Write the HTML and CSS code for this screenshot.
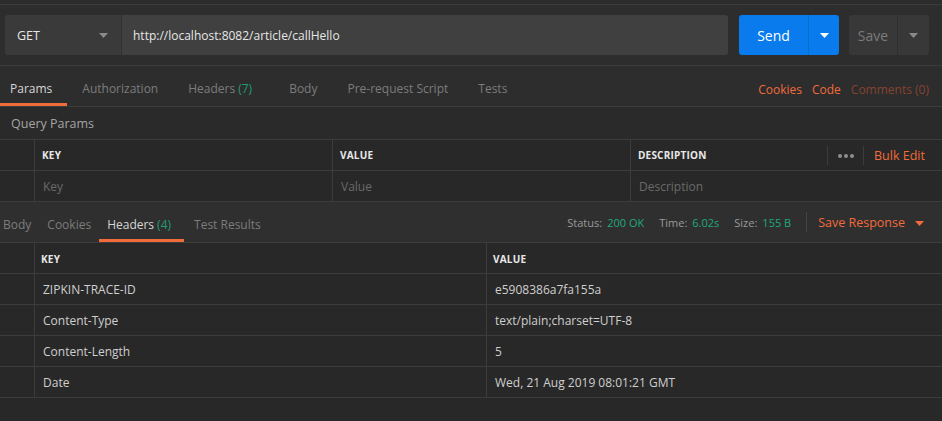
FILE: index.html
```html
<!DOCTYPE html>
<html>
<head>
<meta charset="utf-8">
<link rel="stylesheet" href="styles.css">
</head>
<body>
<div class="topstrip"></div>
<div class="requestbar">
  <div class="urlgroup">
    <div class="method"><span>GET</span><svg class="caret" width="9" height="5" viewBox="0 0 9 5"><path d="M0 0h9L4.5 5z" fill="#8a8a8a"/></svg></div>
    <div class="url">http://localhost:8082/article/callHello</div>
  </div>
  <div class="btn send"><span class="main">Send</span><span class="drop"><svg width="9" height="5" viewBox="0 0 9 5"><path d="M0 0h9L4.5 5z" fill="#fff"/></svg></span></div>
  <div class="btn save"><span class="main">Save</span><span class="drop"><svg width="9" height="5" viewBox="0 0 9 5"><path d="M0 0h9L4.5 5z" fill="#8a8a8a"/></svg></span></div>
</div>
<div class="reqtabs">
  <div class="tabs">
    <div class="tab active first">Params</div>
    <div class="tab">Authorization</div>
    <div class="tab wide">Headers <span class="count">(7)</span></div>
    <div class="tab">Body</div>
    <div class="tab">Pre-request Script</div>
    <div class="tab">Tests</div>
  </div>
  <div class="links">
    <span class="link">Cookies</span>
    <span class="link">Code</span>
    <span class="link dim">Comments (0)</span>
  </div>
</div>
<div class="qp">Query Params</div>
<div class="ptable">
  <div class="prow head">
    <div class="c"></div>
    <div class="c">KEY</div>
    <div class="c">VALUE</div>
    <div class="c desc">DESCRIPTION</div>
    <div class="c dots"><span></span><span></span><span></span></div>
    <div class="c bulk">Bulk Edit</div>
  </div>
  <div class="prow">
    <div class="c"></div>
    <div class="c ph">Key</div>
    <div class="c ph">Value</div>
    <div class="c ph nb">Description</div>
    <div class="c nb"></div>
    <div class="c nb"></div>
  </div>
</div>
<div class="restabs">
  <div class="tabs small">
    <div class="tab rfirst">Body</div>
    <div class="tab">Cookies</div>
    <div class="tab active">Headers <span class="count">(4)</span></div>
    <div class="tab rlast">Test Results</div>
  </div>
  <div class="status">
    <span class="lbl">Status:</span><span class="val">200 OK</span>
    <span class="lbl">Time:</span><span class="val">6.02s</span>
    <span class="lbl">Size:</span><span class="val">155 B</span>
    <span class="saveresp">Save Response <svg width="9" height="5" viewBox="0 0 9 5"><path d="M0 0h9L4.5 5z" fill="#f26b3a"/></svg></span>
  </div>
</div>
<div class="rtable">
  <div class="rrow head"><div class="c"></div><div class="c">KEY</div><div class="c">VALUE</div></div>
  <div class="rrow"><div class="c"></div><div class="c">ZIPKIN-TRACE-ID</div><div class="c">e5908386a7fa155a</div></div>
  <div class="rrow"><div class="c"></div><div class="c">Content-Type</div><div class="c">text/plain;charset=UTF-8</div></div>
  <div class="rrow"><div class="c"></div><div class="c">Content-Length</div><div class="c">5</div></div>
  <div class="rrow"><div class="c"></div><div class="c">Date</div><div class="c">Wed, 21 Aug 2019 08:01:21 GMT</div></div>
</div>
</body>
</html>
```
FILE: styles.css
```css
* { box-sizing: border-box; }
html, body { margin: 0; padding: 0; }
body {
  background: #282828;
  font-family: "Open Sans", "Noto Sans", sans-serif;
  font-size: 12px;
  color: #cfcfcf;
  width: 942px;
  height: 421px;
  overflow: hidden;
}
.topstrip {
  height: 5px;
  background: #2c2c2c;
  border-bottom: 1px solid #3c3c3c;
}
.requestbar {
  display: flex;
  align-items: center;
  height: 61px;
  padding: 10px 13px 10px 5px;
  background: #2d2d2d;
  border-bottom: 1px solid #3c3c3c;
}
.urlgroup {
  display: flex;
  flex: 0 0 723px;
  height: 40px;
  border-radius: 3px;
  overflow: hidden;
}
.method {
  width: 117px;
  background: #3a3a3a;
  border-right: 1px solid #323232;
  display: flex;
  align-items: center;
  justify-content: space-between;
  padding: 0 13px 0 12px;
  font-size: 12.5px;
  color: #e6e6e6;
}
.url {
  flex: 1;
  background: #404040;
  display: flex;
  align-items: center;
  padding-left: 11px;
  font-size: 12px;
  color: #e6e6e6;
}
.btn {
  display: flex;
  height: 40px;
  border-radius: 3px;
  overflow: hidden;
  font-size: 14px;
}
.btn .main, .btn .drop {
  display: flex;
  align-items: center;
  justify-content: center;
}
.send { flex: 0 0 100px; margin-left: 11px; background: #097bed; color: #fff; }
.send .main { width: 70px; border-right: 1px solid #0a6cd0; }
.send .drop { flex: 1; }
.save { flex: 0 0 80px; margin-left: 10px; background: #383838; color: #7b7b7b; }
.save .main { width: 49px; border-right: 1px solid #2f2f2f; }
.save .drop { flex: 1; }

.reqtabs, .restabs {
  display: flex;
  justify-content: space-between;
  align-items: stretch;
  height: 41px;
  border-bottom: 1px solid #3c3c3c;
}
.reqtabs { background: #2d2d2d; }
.restabs { background: #2f2f2f; }
.tabs { display: flex; align-items: stretch; }
.tab {
  display: flex;
  align-items: center;
  padding: 7px 15px 0 15px;
  color: #7c7c7c;
  border-bottom: 3px solid transparent;
  white-space: nowrap;
}
.tab.first { padding-left: 10px; }
.tab.wide { padding-right: 22px; }
.tab.active { color: #d6d6d6; border-bottom-color: #f26b3a; }
.count { color: #1e9e72; margin-left: 3px; }
.tabs.small .tab { padding: 7px 8px 0 8px; }
.tabs.small .tab.rfirst { padding-left: 3px; padding-right: 8px; }
.tabs.small .tab.active { padding-right: 13px; }
.tabs.small .tab.rlast { padding-left: 10px; }

.links {
  display: flex;
  align-items: center;
  padding-right: 13px;
  padding-top: 6px;
}
.link { color: #f26b3a; margin-left: 10px; }
.link.dim { color: #864331; }

.qp {
  height: 33px;
  display: flex;
  align-items: center;
  padding-left: 11px;
  color: #a5a5a5;
  font-size: 12.5px;
  background: #2a2a2a;
  border-bottom: 1px solid #3c3c3c;
}
.ptable, .rtable { background: #282828; }
.prow {
  display: grid;
  grid-template-columns: 35px 298px 298px 196px 37px 1fr;
  height: 31px;
  border-bottom: 1px solid #3c3c3c;
}
.rrow {
  display: grid;
  grid-template-columns: 35px 452px 1fr;
  height: 31px;
  border-bottom: 1px solid #3c3c3c;
}
.c {
  display: flex;
  align-items: center;
  padding-left: 7px;
  border-right: 1px solid #3c3c3c;
  white-space: nowrap;
  color: #cfcfcf;
}
.c:last-child { border-right: none; }
.rrow .c { padding-left: 8px; padding-top: 1px; }
.head .c {
  font-size: 10px;
  font-weight: 700;
  color: #e8e8e8;
  letter-spacing: 0.2px;
}
.rrow.head .c { padding-left: 6px; }
.ph { color: #6a6a6a; padding-left: 8px; }
.c.nb { border-right: none; }
.head .c.desc { border-right: none; }
.dots {
  justify-content: center;
  padding-left: 0;
  gap: 2px;
  height: 19px;
  align-self: center;
  margin-top: 1px;
  border-left: 1px solid #3c3c3c;
}
.head .dots { border-right: 1px solid #3c3c3c; }
.dots span {
  width: 4px; height: 4px; border-radius: 50%;
  background: #8e8e8e;
}
.head .bulk {
  font-size: 12.5px;
  font-weight: 400;
  color: #f26b3a;
  padding-left: 10px;
  letter-spacing: 0;
}

.status {
  display: flex;
  align-items: center;
  font-size: 11px;
  padding-right: 18px;
}
.lbl { color: #9a9a9a; margin-left: 15px; margin-right: 5px; }
.lbl:first-child { margin-left: 0; }
.val { color: #1eab79; }
.saveresp {
  display: flex;
  align-items: center;
  gap: 10px;
  margin-left: 15px;
  padding-left: 11px;
  border-left: 1px solid #444;
  height: 20px;
  font-size: 12.5px;
  color: #f26b3a;
}
.saveresp svg { margin-top: 2px; }
```
